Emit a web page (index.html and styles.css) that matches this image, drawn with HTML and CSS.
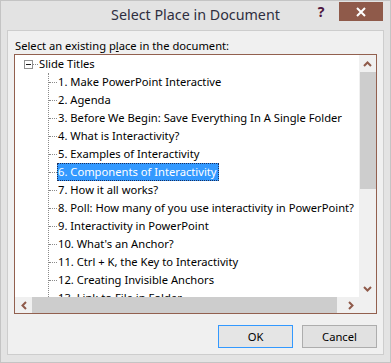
FILE: index.html
```html
<!DOCTYPE html>
<html>
<head>
<meta charset="utf-8">
<link rel="stylesheet" href="styles.css">
</head>
<body>
<div class="window">
  <div class="titlebar">
    <div class="title">Select Place in Document</div>
    <div class="controls">
      <div class="help">?</div>
      <div class="close"><svg width="10" height="10" viewBox="0 0 10 10"><path d="M1 1 L9 9 M9 1 L1 9" stroke="#fff" stroke-width="2" fill="none"/></svg></div>
    </div>
  </div>
  <div class="client">
    <div class="label">Select an existing p<u>l</u>ace in the document:</div>
    <div class="listbox">
      <div class="tree-area">
        <div class="root-row">
          <span class="expander"><span class="minus"></span></span>
          <span class="root-conn"></span>
          <span class="item">Slide Titles</span>
        </div>
        <div class="children">
          <div class="row"><span class="item">1. Make PowerPoint Interactive</span></div>
          <div class="row"><span class="item">2. Agenda</span></div>
          <div class="row"><span class="item">3. Before We Begin: Save Everything In A Single Folder</span></div>
          <div class="row"><span class="item">4. What is Interactivity?</span></div>
          <div class="row"><span class="item">5. Examples of Interactivity</span></div>
          <div class="row"><span class="item selected">6. Components of Interactivity</span></div>
          <div class="row"><span class="item">7. How it all works?</span></div>
          <div class="row"><span class="item">8. Poll: How many of you use interactivity in PowerPoint?</span></div>
          <div class="row"><span class="item">9. Interactivity in PowerPoint</span></div>
          <div class="row"><span class="item">10. What's an Anchor?</span></div>
          <div class="row"><span class="item">11. Ctrl + K, the Key to Interactivity</span></div>
          <div class="row"><span class="item">12. Creating Invisible Anchors</span></div>
          <div class="row"><span class="item">13. Link to File in Folder</span></div>
        </div>
      </div>
      <div class="vscroll">
        <div class="sbtn"><svg width="9" height="6" viewBox="0 0 9 6"><polyline points="1,5 4.5,1.5 8,5" stroke="#8f5a4a" stroke-width="2" fill="none"/></svg></div>
        <div class="vthumb"></div>
        <div class="vtrack"></div>
        <div class="sbtn"><svg width="9" height="6" viewBox="0 0 9 6"><polyline points="1,1 4.5,4.5 8,1" stroke="#8f5a4a" stroke-width="2" fill="none"/></svg></div>
      </div>
      <div class="hscroll">
        <div class="sbtn"><svg width="6" height="9" viewBox="0 0 6 9"><polyline points="5,1 1.5,4.5 5,8" stroke="#8f5a4a" stroke-width="2" fill="none"/></svg></div>
        <div class="hthumb"></div>
        <div class="sbtn"><svg width="6" height="9" viewBox="0 0 6 9"><polyline points="1,1 4.5,4.5 1,8" stroke="#8f5a4a" stroke-width="2" fill="none"/></svg></div>
      </div>
      <div class="corner"></div>
    </div>
    <div class="buttons">
      <div class="btn default">OK</div>
      <div class="btn">Cancel</div>
    </div>
  </div>
</div>
</body>
</html>
```

FILE: styles.css
```css
* { box-sizing: border-box; }
html, body { margin: 0; padding: 0; }
body {
  width: 391px;
  height: 363px;
  overflow: hidden;
  font-family: "Noto Sans", "Liberation Sans", sans-serif;
  font-size: 11.2px;
  color: #000;
}
.window {
  width: 391px;
  height: 363px;
  background: #e3e3e3;
  box-shadow: inset 0 0 0 1px #c4c4c4;
  display: flex;
  flex-direction: column;
}
.titlebar {
  height: 30px;
  display: grid;
  grid-template-areas: "a";
}
.title {
  grid-area: a;
  text-align: center;
  font-size: 14.3px;
  line-height: 30px;
  color: #2e2e40;
}
.controls {
  grid-area: a;
  justify-self: end;
  display: flex;
  align-items: flex-start;
  margin-right: 8px;
}
.help {
  width: 26px;
  height: 20px;
  margin-top: 2px;
  margin-right: 5px;
  text-align: center;
  font-weight: bold;
  font-size: 14px;
  line-height: 20px;
  color: #4d1640;
}
.close {
  width: 44px;
  height: 19px;
  margin-top: 2px;
  background: #8f5a4a;
  display: flex;
  align-items: center;
  justify-content: center;
}
.client {
  margin: 0 7px 0 7px;
  height: 325px;
  border: 1px solid #cdcdcd;
  background: #f0f0f0;
  padding: 6px 6px 6px 6px;
  display: flex;
  flex-direction: column;
}
.label {
  height: 17px;
  line-height: 17px;
  padding-left: 1px;
}
.listbox {
  width: 363px;
  height: 260px;
  flex: none;
  border: 1px solid #92604f;
  display: grid;
  grid-template-columns: 344px 17px;
  grid-template-rows: 242px 16px;
  background: #fff;
}
.tree-area {
  background: #fff;
  overflow: hidden;
  white-space: nowrap;
}
.root-row {
  height: 18px;
  display: flex;
  align-items: center;
}
.expander {
  flex: none;
  width: 9px;
  height: 9px;
  margin-left: 9px;
  border: 1px solid #919191;
  background: #fff;
  display: flex;
  align-items: center;
  justify-content: center;
}
.minus {
  width: 5px;
  height: 1px;
  background: #1a1a1a;
}
.root-conn {
  flex: none;
  width: 5px;
  border-top: 1px dotted #8a8a8a;
}
.item {
  flex: none;
  display: inline-block;
  height: 18px;
  line-height: 16px;
  border: 1px solid transparent;
  padding: 0 1px 0 0;
}
.children {
  margin-left: 33px;
  border-left: 1px dotted #8a8a8a;
}
.row {
  height: 18px;
  display: flex;
  align-items: center;
}
.row::before {
  content: "";
  flex: none;
  width: 8px;
  border-top: 1px dotted #8a8a8a;
}
.item.selected {
  background: #3399ff;
  color: #fff;
  border: 1px dotted #1c2f5c;
}
.vscroll {
  background: #f0f0f0;
  display: flex;
  flex-direction: column;
}
.sbtn {
  width: 17px;
  height: 17px;
  flex: none;
  display: flex;
  align-items: center;
  justify-content: center;
  background: #f0f0f0;
}
.vthumb {
  flex: none;
  height: 117px;
  margin-left: 1px;
  background: #cdcdcd;
}
.vtrack { flex: 1; }
.hscroll {
  background: #f0f0f0;
  display: flex;
}
.hscroll .sbtn { height: 16px; }
.hthumb {
  flex: none;
  width: 305px;
  margin-right: 5px;
  background: #cdcdcd;
}
.corner { background: #f0f0f0; }
.buttons {
  margin-top: 11px;
  display: flex;
  justify-content: flex-end;
  gap: 9px;
}
.btn {
  width: 75px;
  height: 23px;
  border: 1px solid #adadad;
  background: #e1e1e1;
  text-align: center;
  line-height: 21px;
}
.btn.default {
  border-color: #3399ff;
  background: #e5e5e5;
}
```
